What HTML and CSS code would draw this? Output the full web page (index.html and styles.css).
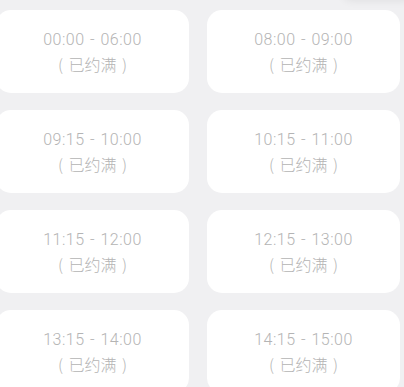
FILE: index.html
```html
<!DOCTYPE html>
<html lang="zh-CN">
<head>
<meta charset="utf-8">
<link rel="stylesheet" href="styles.css">
</head>
<body>
<div class="page">
  <div class="top-shade"></div>
  <div class="grid">
    <div class="slot"><div class="time">00:00 - 06:00</div><div class="state">( 已约满 )</div></div>
    <div class="slot"><div class="time">08:00 - 09:00</div><div class="state">( 已约满 )</div></div>
    <div class="slot"><div class="time">09:15 - 10:00</div><div class="state">( 已约满 )</div></div>
    <div class="slot"><div class="time">10:15 - 11:00</div><div class="state">( 已约满 )</div></div>
    <div class="slot"><div class="time">11:15 - 12:00</div><div class="state">( 已约满 )</div></div>
    <div class="slot"><div class="time">12:15 - 13:00</div><div class="state">( 已约满 )</div></div>
    <div class="slot"><div class="time">13:15 - 14:00</div><div class="state">( 已约满 )</div></div>
    <div class="slot"><div class="time">14:15 - 15:00</div><div class="state">( 已约满 )</div></div>
  </div>
</div>
</body>
</html>
```

FILE: styles.css
```css
html, body {
  margin: 0;
  padding: 0;
  background: #f0f0f2;
}
body {
  font-family: "Noto Sans CJK SC", "Noto Sans", sans-serif;
  width: 404px;
  height: 387px;
  overflow: hidden;
}
.page {
  position: relative;
  width: 404px;
  height: 387px;
  overflow: hidden;
}
.top-shade {
  position: absolute;
  top: -20px;
  right: -10px;
  width: 72px;
  height: 20px;
  border-radius: 10px;
  box-shadow: 0 1px 8px rgba(0, 0, 0, 0.07);
  background: #f0f0f2;
}
.grid {
  display: grid;
  grid-template-columns: 193px 193px;
  grid-auto-rows: 83px;
  column-gap: 18px;
  row-gap: 17px;
  padding-top: 10px;
  margin-left: -4px;
}
.slot {
  background: #ffffff;
  border-radius: 15px;
  display: flex;
  flex-direction: column;
  align-items: center;
  justify-content: center;
  color: #b4b4b4;
}
.time {
  font-family: Roboto, "Noto Sans", sans-serif;
  font-size: 16px;
  line-height: 24px;
  font-weight: 300;
  letter-spacing: 0.5px;
  word-spacing: 1px;
  padding-top: 1px;
}
.state {
  font-family: "Noto Sans CJK SC", sans-serif;
  font-size: 16px;
  line-height: 24px;
  font-weight: 300;
  word-spacing: 2px;
}
```
